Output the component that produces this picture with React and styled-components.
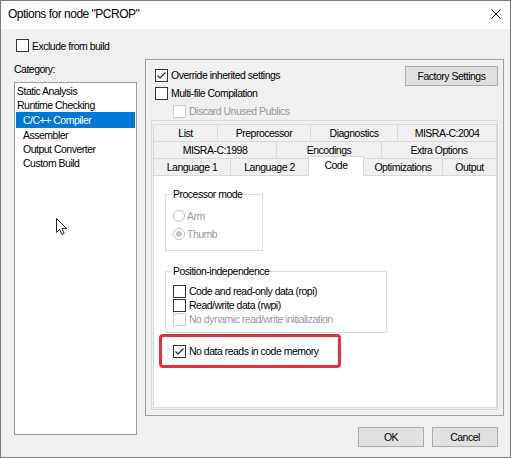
import styled, { createGlobalStyle } from 'styled-components'

const GlobalStyle = createGlobalStyle`
  *, *::before, *::after {
    box-sizing: border-box;
  }
  body {
    margin: 0;
    font-family: "Liberation Sans", Arial, sans-serif;
    font-size: 10.5px;
    letter-spacing: -0.5px;
    color: #000;
  }
`

const Window = styled.div`
  position: relative;
  width: 511px;
  height: 458px;
  border: 1px solid #7a7a7a;
  display: flex;
  flex-direction: column;
  background: #f0f0f0;
  overflow: hidden;
`

const TitleBar = styled.div`
  height: 28px;
  flex: none;
  background: #fff;
  display: flex;
  align-items: center;
  justify-content: space-between;
  padding: 0 9px 2px 7px;
`

const Title = styled.span`
  font-size: 12px;
`

const Body = styled.div`
  flex: 1;
  display: flex;
  flex-direction: column;
  padding: 10px 6px 0 13px;
`

const CheckRow = styled.label`
  display: flex;
  align-items: center;
  gap: 3px;
  height: ${(p) => p.$h || 13}px;
  padding-left: ${(p) => p.$indent || 0}px;
  color: ${(p) => (p.$disabled ? '#9a9a9a' : '#000')};
  white-space: nowrap;
`

const Box = styled.span`
  width: 13px;
  height: 13px;
  flex: none;
  border: 1px solid ${(p) => (p.$disabled ? '#cfcfcf' : '#333')};
  background: #fff;
  display: inline-flex;
  align-items: center;
  justify-content: center;
`

const RadioDot = styled.span`
  width: 12px;
  height: 12px;
  flex: none;
  border-radius: 50%;
  border: 1px solid #c2c2c2;
  background: #fff;
  display: inline-flex;
  align-items: center;
  justify-content: center;
  &::after {
    content: '';
    width: 6px;
    height: 6px;
    border-radius: 50%;
    background: ${(p) => (p.$on ? '#c4c4c4' : 'transparent')};
  }
`

const Main = styled.div`
  display: flex;
  gap: 8px;
  margin-top: 7px;
  align-items: flex-start;
`

const LeftColumn = styled.div`
  width: 123px;
  padding-top: 4px;
  display: flex;
  flex-direction: column;
`

const Caption = styled.div`
  height: 13px;
  line-height: 13px;
`

const ListBox = styled.div`
  margin-top: 6px;
  height: 353px;
  border: 1px solid #9a9a9a;
  background: #fff;
  padding: 1px 1px 0 1px;
`

const ListItem = styled.div`
  height: ${(p) => (p.$selected ? 16 : 14)}px;
  line-height: ${(p) => (p.$selected ? 16 : 14)}px;
  padding-left: ${(p) => (p.$child ? 7 : 1)}px;
  background: ${(p) => (p.$selected ? '#0078d7' : 'transparent')};
  color: ${(p) => (p.$selected ? '#fff' : '#000')};
  white-space: nowrap;
`

const RightColumn = styled.div`
  width: 359px;
  display: flex;
  flex-direction: column;
`

const Panel = styled.div`
  height: 357px;
  border: 1px solid #a0a0a0;
  padding: 6px 5px 5px 5px;
  display: flex;
  flex-direction: column;
`

const TopSection = styled.div`
  display: flex;
  justify-content: space-between;
  padding-left: 4px;
`

const Options = styled.div`
  display: flex;
  flex-direction: column;
`

const Button = styled.button`
  width: ${(p) => p.$w}px;
  height: 20px;
  border: 1px solid #adadad;
  background: #e1e1e1;
  font: inherit;
  letter-spacing: inherit;
  color: #000;
  padding: 0;
`

const TabFrame = styled.div`
  flex: 1;
  border: 1px solid #d9d9d9;
  padding: 3px 0 1px 1px;
  display: flex;
  flex-direction: column;
`

const TabRow = styled.div`
  display: flex;
  & + & {
    margin-top: -1px;
  }
`

const Tab = styled.div`
  width: ${(p) => p.$w}px;
  height: ${(p) => (p.$active ? 20 : 18)}px;
  flex: none;
  border: 1px solid #d9d9d9;
  border-bottom-color: ${(p) => (p.$active ? '#fff' : '#d9d9d9')};
  margin-top: ${(p) => (p.$active ? -2 : 0)}px;
  padding-bottom: ${(p) => (p.$active ? 3 : 0)}px;
  background: ${(p) => (p.$active ? '#fff' : '#f0f0f0')};
  position: relative;
  z-index: ${(p) => (p.$active ? 1 : 0)};
  display: flex;
  align-items: center;
  justify-content: center;
  white-space: nowrap;
  & + & {
    margin-left: -1px;
  }
`

const TabPage = styled.div`
  flex: 1;
  margin-top: -1px;
  border: 1px solid #d9d9d9;
  background: #fff;
  padding: 0 0 0 11px;
  display: flex;
  flex-direction: column;
  align-items: flex-start;
`

const GroupBox = styled.fieldset`
  width: ${(p) => p.$w}px;
  margin: ${(p) => p.$top}px 0 0 0;
  border: 1px solid #dcdcdc;
  padding: 7px 7px ${(p) => p.$bottom}px 7px;
  min-inline-size: 0;
`

const Legend = styled.legend`
  padding: 0 1px;
  margin-left: -1px;
  line-height: 12px;
`

const RadioRow = styled.div`
  display: flex;
  align-items: center;
  gap: 2px;
  height: 18px;
  color: #9a9a9a;
`

const Highlight = styled.div`
  margin: 1px 0 0 -6px;
  width: 182px;
  height: 34px;
  border: 3px solid #e5323a;
  border-radius: 4px;
  padding: 7px 0 0 11px;
`

const ButtonRow = styled.div`
  display: flex;
  justify-content: flex-end;
  gap: 8px;
  margin-top: 11px;
  padding-right: 6px;
`

const Pointer = styled.svg`
  position: absolute;
  left: 54px;
  top: 216px;
`

function Check({ checked, disabled }) {
  return (
    <Box $disabled={disabled}>
      {checked && (
        <svg width="11" height="11" viewBox="0 0 11 11">
          <polyline
            points="1.5,5.5 4,8 9.5,2.5"
            fill="none"
            stroke="#222"
            strokeWidth="1.2"
          />
        </svg>
      )}
    </Box>
  )
}

function CheckItem({ label, checked, disabled, h, indent }) {
  return (
    <CheckRow $disabled={disabled} $h={h} $indent={indent}>
      <Check checked={checked} disabled={disabled} />
      {label}
    </CheckRow>
  )
}

const categories = [
  { name: 'Static Analysis' },
  { name: 'Runtime Checking' },
  { name: 'C/C++ Compiler', child: true, selected: true },
  { name: 'Assembler', child: true },
  { name: 'Output Converter', child: true },
  { name: 'Custom Build', child: true },
]

const tabRows = [
  [['List', 65], ['Preprocessor', 94], ['Diagnostics', 88], ['MISRA-C:2004', 100]],
  [['MISRA-C:1998', 124], ['Encodings', 106], ['Extra Options', 116]],
  [['Language 1', 78], ['Language 2', 79], ['Code', 56, true], ['Optimizations', 80], ['Output', 55]],
]

export default function App() {
  return (
    <>
      <GlobalStyle />
      <Window>
        <TitleBar>
          <Title>Options for node "PCROP"</Title>
          <svg width="10" height="10" viewBox="0 0 10 10">
            <path d="M0.5 0.5 L9.5 9.5 M9.5 0.5 L0.5 9.5" stroke="#111" strokeWidth="1" />
          </svg>
        </TitleBar>
        <Body>
          <CheckItem label="Exclude from build" indent={2} />
          <Main>
            <LeftColumn>
              <Caption>Category:</Caption>
              <ListBox>
                {categories.map((c) => (
                  <ListItem key={c.name} $child={c.child} $selected={c.selected}>
                    {c.name}
                  </ListItem>
                ))}
              </ListBox>
            </LeftColumn>
            <RightColumn>
              <Panel>
                <TopSection>
                  <Options>
                    <CheckItem label="Override inherited settings" checked h={18} />
                    <CheckItem label="Multi-file Compilation" h={18} />
                    <CheckItem label="Discard Unused Publics" disabled h={18} indent={18} />
                  </Options>
                  <Button $w={93}>Factory Settings</Button>
                </TopSection>
                <TabFrame>
                  {tabRows.map((row, i) => (
                    <TabRow key={i}>
                      {row.map(([name, w, active]) => (
                        <Tab key={name} $w={w} $active={active}>
                          {name}
                        </Tab>
                      ))}
                    </TabRow>
                  ))}
                  <TabPage>
                    <GroupBox $w={98} $top={12} $bottom={7}>
                      <Legend>Processor mode</Legend>
                      <RadioRow>
                        <RadioDot />
                        Arm
                      </RadioRow>
                      <RadioRow>
                        <RadioDot $on />
                        Thumb
                      </RadioRow>
                    </GroupBox>
                    <GroupBox $w={222} $top={14} $bottom={6}>
                      <Legend>Position-independence</Legend>
                      <CheckItem label="Code and read-only data (ropi)" h={14} />
                      <CheckItem label="Read/write data (rwpi)" h={14} />
                      <CheckItem label="No dynamic read/write initialization" disabled h={14} />
                    </GroupBox>
                    <Highlight>
                      <CheckItem label="No data reads in code memory" checked h={14} />
                    </Highlight>
                  </TabPage>
                </TabFrame>
              </Panel>
              <ButtonRow>
                <Button $w={66}>OK</Button>
                <Button $w={66}>Cancel</Button>
              </ButtonRow>
            </RightColumn>
          </Main>
        </Body>
        <Pointer width="13" height="19" viewBox="0 0 13 19">
          <path
            d="M1.5 1.5 L1.5 15.5 L4.7 12.4 L7 17.5 L9.2 16.5 L7 11.5 L11.5 11.5 Z"
            fill="#fff"
            stroke="#222"
            strokeWidth="1"
            strokeLinejoin="miter"
          />
        </Pointer>
      </Window>
    </>
  )
}
